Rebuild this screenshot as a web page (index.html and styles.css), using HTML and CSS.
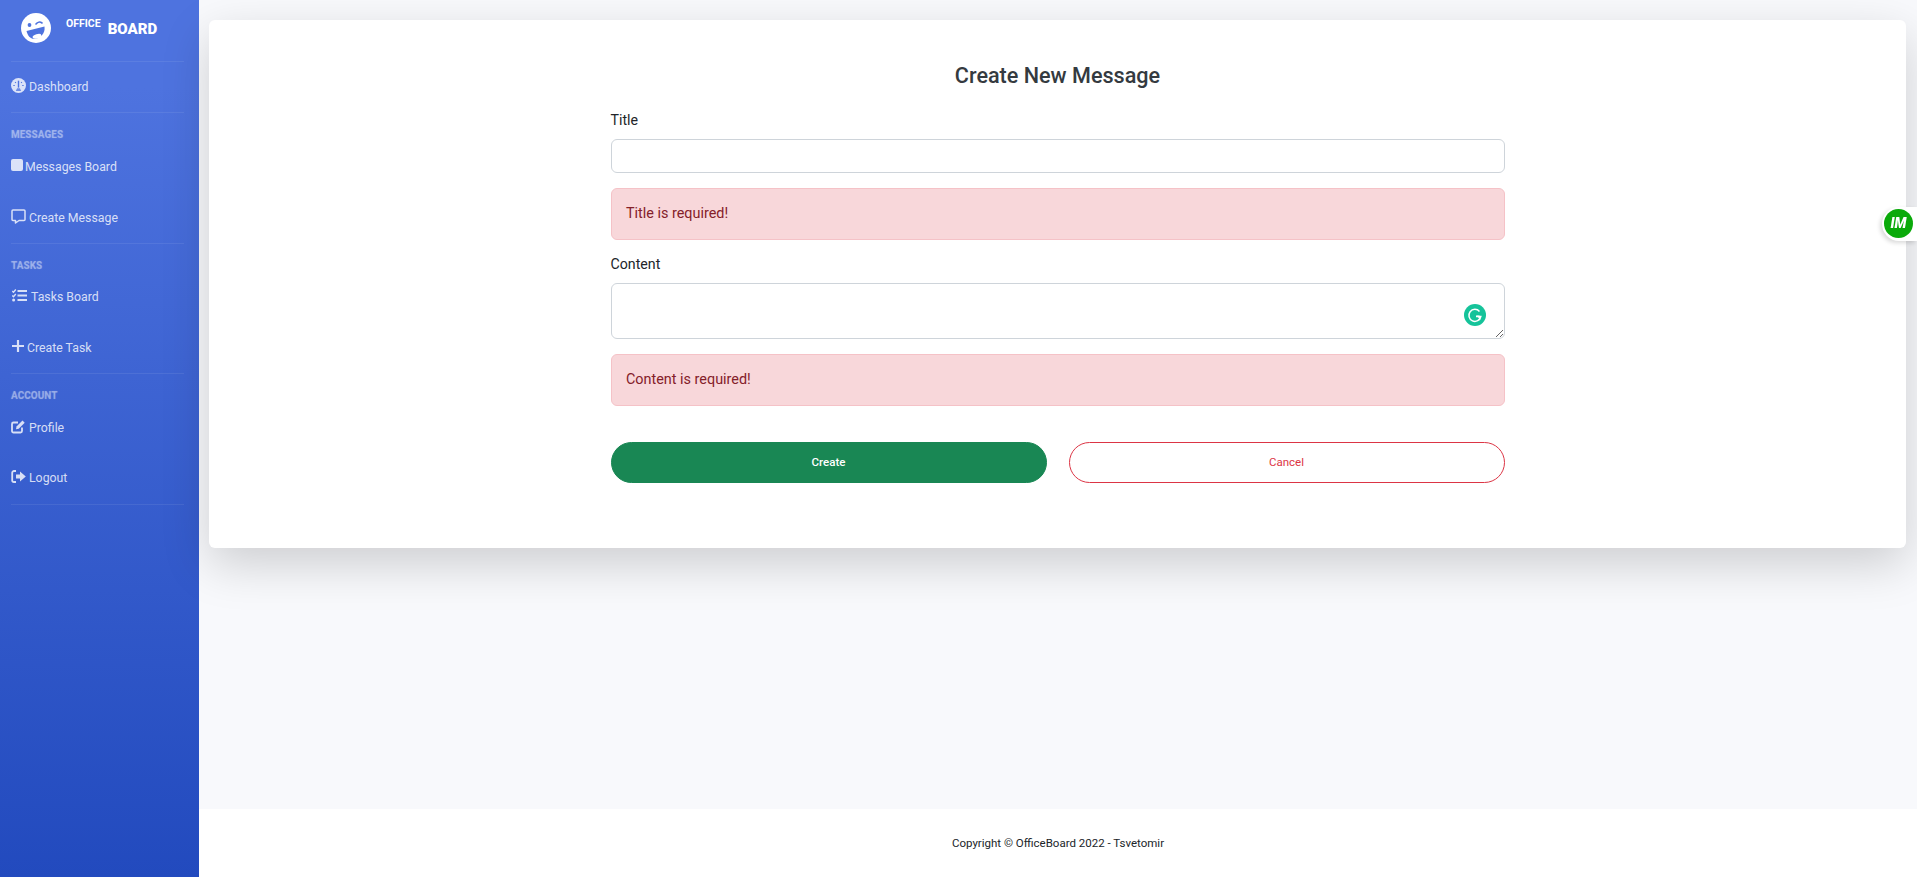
FILE: index.html
```html
<!DOCTYPE html>
<html lang="en">
<head>
    <meta charset="UTF-8">
    <title>Create New Message</title>
    <link rel="stylesheet" href="styles.css">
</head>
<body>
<div class="wrapper">
    <aside class="sidebar">
        <a class="brand" href="#">
            <svg class="brand-logo" viewBox="0 0 30 30">
                <circle cx="15" cy="15" r="15" fill="#fff"/>
                <circle cx="8.500" cy="12" r="1.900" fill="#4e73df"/>
                <path d="M15 11c1.500-2 4-2.500 6-1" fill="none" stroke="#4e73df" stroke-width="1.600" stroke-linecap="round"/>
                <path d="M5.500 18L23.500 13.500C24.500 20 19.500 25.500 13.500 26 9.500 26.300 6.500 22.500 5.500 18z" fill="#4e73df"/>
                <ellipse cx="16" cy="23.300" rx="4.500" ry="2.200" transform="rotate(-15 16 23.300)" fill="#fff"/>
            </svg>
            <span class="brand-small">OFFICE</span>
            <span class="brand-big">BOARD</span>
        </a>
        <hr class="divider">
        <a class="nav-item nav-first" href="#">
            <svg class="ico" viewBox="0 0 14 14"><circle cx="7" cy="7" r="7" fill="currentColor"/><path d="M7 9V2.500" stroke="#4e73df" stroke-width="1.300" fill="none"/><path d="M2.200 7h1.300M10.500 7h1.300M3.800 3.800l.8.8M10.200 3.800l-.8.8" stroke="#4e73df" stroke-width="1" fill="none"/><path d="M4.500 12.200h5L8.300 9.500H5.700z" fill="#6d8ae3"/></svg>
            <span>Dashboard</span>
        </a>
        <hr class="divider">
        <div class="nav-heading">Messages</div>
        <a class="nav-item nav-tight" href="#">
            <svg class="ico ico-square" viewBox="0 0 12 12"><rect width="12" height="12" rx="2" fill="currentColor"/></svg>
            <span>Messages Board</span>
        </a>
        <a class="nav-item nav-low" href="#">
            <svg class="ico" viewBox="0 0 15 15"><path d="M2 1h11a1 1 0 0 1 1 1v8.500a1 1 0 0 1-1 1H8l-3.500 2.500v-2.500H2a1 1 0 0 1-1-1V2a1 1 0 0 1 1-1z" fill="none" stroke="currentColor" stroke-width="1.500" stroke-linejoin="round"/></svg>
            <span>Create Message</span>
        </a>
        <hr class="divider">
        <div class="nav-heading">Tasks</div>
        <a class="nav-item" href="#">
            <svg class="ico ico-tasks" viewBox="0 0 15 13"><path d="M5.500 2h9.500M5.500 6.500h9.500M5.500 11h9.500" stroke="currentColor" stroke-width="2" fill="none"/><path d="M.3 2l1.200 1.200L3.800.5M.3 6.500l1.200 1.200 2.300-2.700" stroke="currentColor" stroke-width="1.400" fill="none"/><circle cx="1.600" cy="11" r="1.500" fill="currentColor"/></svg>
            <span>Tasks Board</span>
        </a>
        <a class="nav-item nav-tight" href="#">
            <svg class="ico ico-plus" viewBox="0 0 12 12"><path d="M6 .5v11M.5 6h11" stroke="currentColor" stroke-width="2.200" fill="none" stroke-linecap="round"/></svg>
            <span>Create Task</span>
        </a>
        <hr class="divider">
        <div class="nav-heading">Account</div>
        <a class="nav-item" href="#">
            <svg class="ico" viewBox="0 0 15 15"><path d="M11 8.500v3.500a1.500 1.500 0 0 1-1.500 1.500H2.500A1.500 1.500 0 0 1 1 12V5a1.500 1.500 0 0 1 1.500-1.500H7" fill="none" stroke="currentColor" stroke-width="1.800"/><path d="M5.500 7.500L11.500 1.500l2.200 2.200-6 6-2.700.5z" fill="currentColor"/></svg>
            <span>Profile</span>
        </a>
        <a class="nav-item" href="#">
            <svg class="ico" viewBox="0 0 15 15"><path d="M5 2H3a1.800 1.800 0 0 0-1.800 1.800v7.400A1.800 1.800 0 0 0 3 13h2" fill="none" stroke="currentColor" stroke-width="1.800"/><path d="M9 2.500l5.800 5L9 12.500V9.500H5v-4h4z" fill="currentColor"/></svg>
            <span>Logout</span>
        </a>
        <hr class="divider">
    </aside>

    <div class="main">
        <div class="card">
            <h1 class="card-title">Create New Message</h1>
            <form class="form">
                <label class="form-label" for="title">Title</label>
                <input class="form-control" id="title" type="text">
                <div class="alert">Title is required!</div>

                <label class="form-label" for="content">Content</label>
                <div class="textarea-box">
                    <textarea class="form-control form-area" id="content"></textarea>
                    <svg class="grammarly" viewBox="0 0 22 22">
                        <circle cx="11" cy="11" r="11" fill="#15c39a"/>
                        <path d="M15.500 7.500A6 6 0 1 0 16.800 12.500H12" fill="none" stroke="#fff" stroke-width="1.500"/>
                        <path d="M12 11.500l4.500 4-1-4z" fill="#fff"/>
                    </svg>
                </div>
                <div class="alert">Content is required!</div>

                <div class="buttons">
                    <button class="btn btn-create" type="button">Create</button>
                    <button class="btn btn-cancel" type="button">Cancel</button>
                </div>
            </form>
        </div>
        <footer class="footer">Copyright © OfficeBoard 2022 - Tsvetomir</footer>
    </div>
</div>

<div class="im-tab"><span class="im-logo">IM</span></div>
</body>
</html>
```

FILE: styles.css
```css
* {
    box-sizing: border-box;
    margin: 0;
    padding: 0;
}
html, body {
    height: 100%;
    overflow: hidden;
}
body {
    font-family: Roboto, "Liberation Sans", sans-serif;
    font-size: 14px;
    color: #212529;
    background: #f8f9fc;
}
a {
    text-decoration: none;
}
.wrapper {
    display: flex;
    height: 877px;
}

/* sidebar */
.sidebar {
    width: 199px;
    flex: none;
    background: linear-gradient(180deg, #4e73df 10%, #224abe 100%);
    color: rgba(255,255,255,.8);
}
.brand {
    display: flex;
    align-items: flex-start;
    height: 61px;
    padding: 13px 0 0 21px;
    color: #fff;
}
.brand-logo {
    width: 30px;
    height: 30px;
    margin-right: 15px;
}
.brand-small {
    font-size: 10.500px;
    font-weight: 700;
    line-height: 16px;
    margin-top: 3px;
    margin-right: 7px;
}
.brand-big {
    font-size: 15px;
    font-weight: 900;
    line-height: 18px;
    margin-top: 7px;
}
.divider {
    border: 0;
    height: 1px;
    margin: 0 15px 0 11px;
    background: rgba(255,255,255,.08);
}
.nav-item {
    display: flex;
    align-items: center;
    gap: 3px;
    height: 50.500px;
    padding-left: 11px;
    font-size: 12.300px;
    color: rgba(255,255,255,.8);
}
.nav-first {
    height: 50px;
    padding-bottom: 1px;
}
.nav-tight {
    gap: 2px;
}
.nav-low {
    padding-top: 1px;
}
.ico {
    width: 15px;
    height: 15px;
    flex: none;
    margin-top: -3px;
}
.ico-square {
    width: 12px;
    height: 12px;
}
.ico-tasks {
    margin-left: 1px;
    margin-right: 1px;
}
.ico-plus {
    width: 12px;
    height: 12px;
    margin-left: 1px;
    margin-right: 1px;
}
.nav-heading {
    height: 28.500px;
    padding: 16px 0 0 11px;
    font-size: 10px;
    line-height: 12px;
    font-weight: 800;
    text-transform: uppercase;
    color: rgba(255,255,255,.28);
    text-shadow: 0 0 1px rgba(255,255,255,.3);
}

/* main */
.main {
    flex: 1;
    display: flex;
    flex-direction: column;
    padding-top: 20px;
}
.card {
    height: 528px;
    margin: 0 11px 0 10px;
    padding-top: 41px;
    background: #fff;
    border-radius: 6px;
    box-shadow: 0 16px 48px rgba(0,0,0,.175);
}
.card-title {
    font-size: 21.600px;
    font-weight: 500;
    line-height: 30px;
    text-align: center;
    color: #343a40;
    margin-bottom: 19px;
}
.form {
    width: 894px;
    margin: 0 auto;
}
.form-label {
    display: block;
    font-size: 14.200px;
    line-height: 21px;
    margin-bottom: 8px;
}
.form-control {
    display: block;
    width: 100%;
    height: 34px;
    border: 1px solid #ced4da;
    border-radius: 6px;
    background: #fff;
    font-family: inherit;
    font-size: 14px;
    padding: 6px 12px;
}
.form-area {
    height: 56px;
}
.textarea-box {
    position: relative;
}
.grammarly {
    position: absolute;
    right: 19px;
    top: 21px;
    width: 22px;
    height: 22px;
}
.alert {
    height: 52px;
    margin: 15px 0 14px;
    padding: 0 14.500px;
    line-height: 49px;
    font-size: 14.400px;
    color: #842029;
    background: #f8d7da;
    border: 1px solid #f5c2c7;
    border-radius: 6px;
}
.buttons {
    display: grid;
    grid-template-columns: 1fr 1fr;
    gap: 22px;
    margin-top: 36px;
}
.btn {
    height: 41px;
    padding-bottom: 2px;
    border-radius: 21px;
    font-family: inherit;
    font-size: 11.500px;
}
.btn-create {
    background: #198754;
    border: 1px solid #198754;
    color: #fff;
    font-weight: 500;
}
.btn-cancel {
    background: #fff;
    border: 1px solid #dc3545;
    color: #dc3545;
}

.footer {
    margin-top: auto;
    height: 68px;
    line-height: 68px;
    background: #fff;
    text-align: center;
    font-size: 11.500px;
    color: #212529;
}

/* floating widget on the right edge */
.im-tab {
    position: fixed;
    right: 0;
    top: 207px;
    width: 35px;
    height: 34px;
    padding: 2px 0 0 2px;
    background: #fff;
    border-radius: 17px 0 0 17px;
    box-shadow: -2px 2px 4px rgba(0,0,0,.15);
}
.im-logo {
    display: block;
    width: 29px;
    height: 29px;
    line-height: 29px;
    border-radius: 50%;
    background: #0aaa0a;
    color: #fff;
    text-align: center;
    font-size: 14px;
    font-weight: 900;
    font-style: italic;
}
```
